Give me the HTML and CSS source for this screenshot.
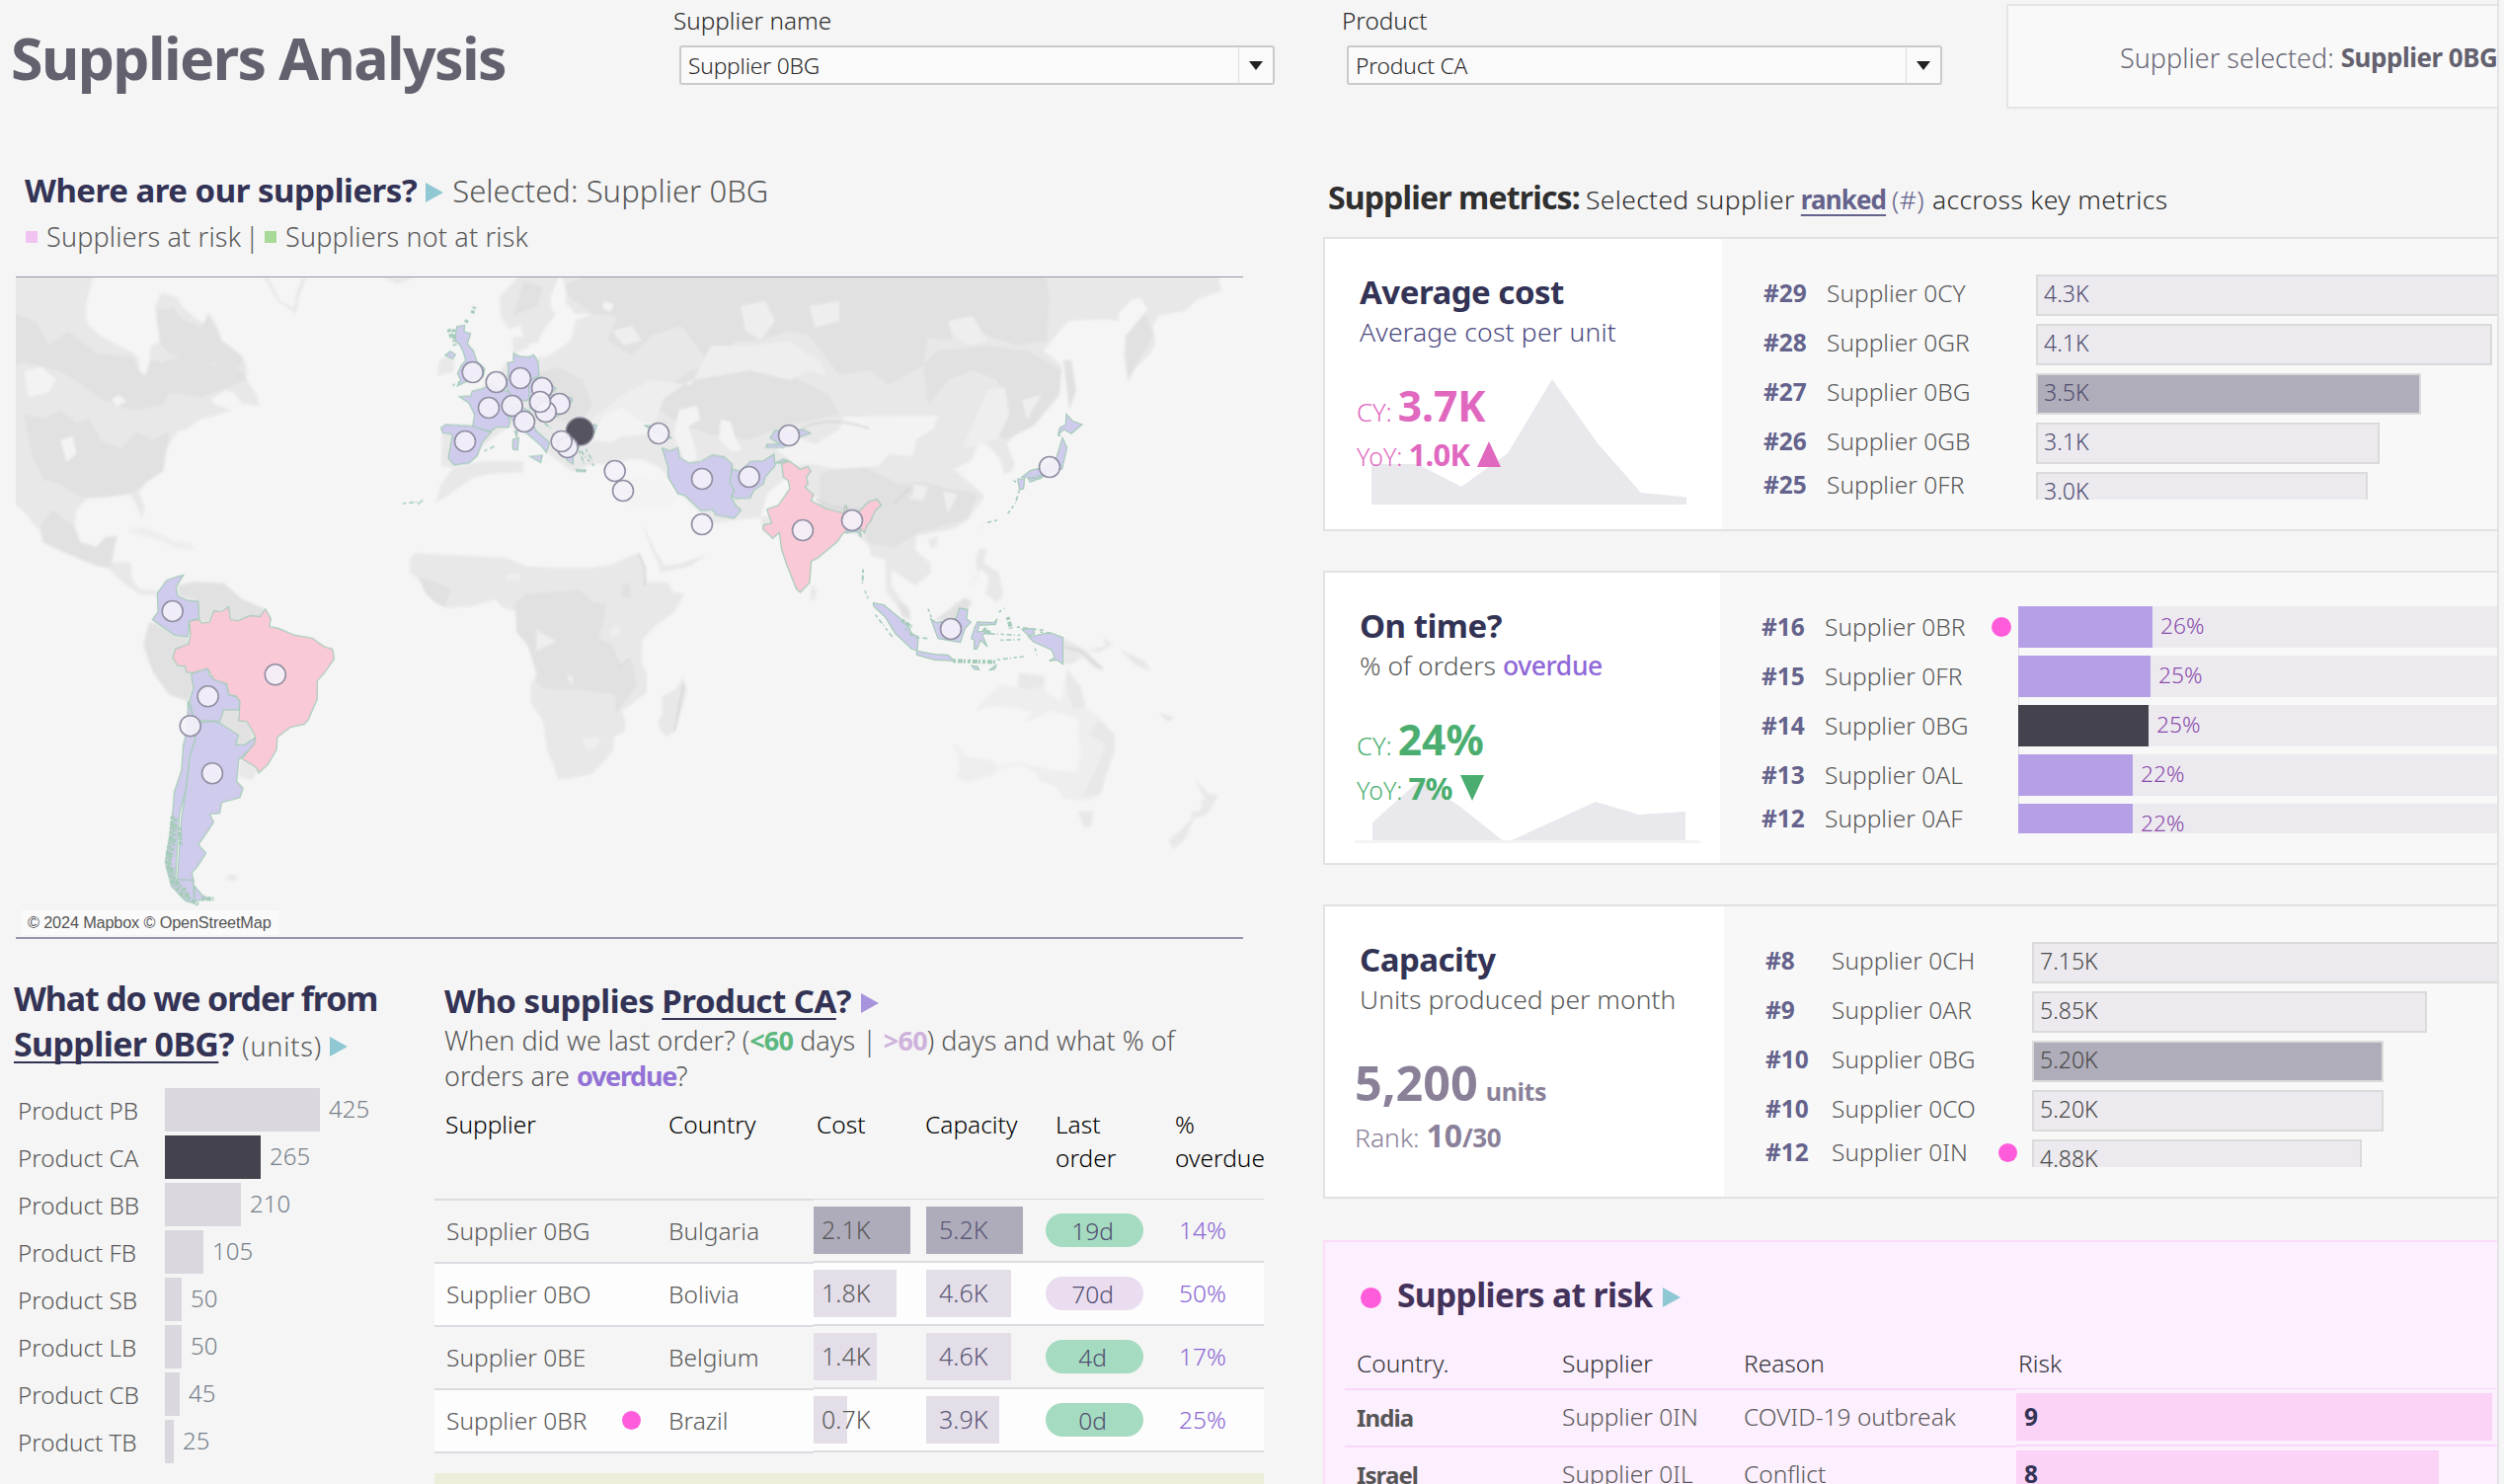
FILE: index.html
```html
<!DOCTYPE html>
<html lang="en">
<head>
<meta charset="utf-8">
<title>Suppliers Analysis</title>
<link rel="stylesheet" href="styles.css">
</head>
<body>
<div class="page">
  <header class="top">
    <h1>Suppliers Analysis</h1>
    <div class="filter filter-supplier"><label>Supplier name</label><div class="select"><span>Supplier 0BG</span><i></i></div></div>
    <div class="filter filter-product"><label>Product</label><div class="select"><span>Product CA</span><i></i></div></div>
    <div class="selected-box"><span>Supplier selected:</span><b>Supplier 0BG</b></div>
  </header>
  <main class="cols">
    <div class="left">
      <h2 class="map-title"><span>Where are our suppliers?</span><i class="tri"></i><em>Selected: Supplier 0BG</em></h2>
      <p class="legend"><i class="sq sq-risk"></i><span class="lg-a">Suppliers at risk</span><span class="lg-bar">|</span><i class="sq sq-ok"></i><span class="lg-b">Suppliers not at risk</span></p>
      <div class="map">
        <svg viewBox="16 281 1243 669" width="1243" height="669">
          <!-- base land -->
          <g class="terrain">
          <g class="land" transform="translate(0 270) scale(.4082 .4401)">
            <path d="M20 15L235 15C215 70 205 110 220 135L250 160 290 180 330 198 345 215 345 240 362 250 372 215 372 185 400 170 388 130 385 90 400 60 440 70 450 90 480 115 505 130 518 105 540 140 550 170 600 205 612 230 612 260 640 300 642 320 600 315 580 290 560 285 525 305 530 315 575 330 530 345 500 350 460 375 440 380 420 410 405 440 405 470 365 495 345 520 360 555 352 580 335 540 320 525 265 530 215 535 190 560 185 600 200 635 240 645 262 622 292 620 280 655 275 680 325 680 328 720 345 742 385 745 395 755 350 755 315 735 270 695 245 690 200 675 150 655 105 635 100 610 60 565 20 535Z"/>
            <path class="l2" d="M20 100L90 130 120 180 170 150 240 200 330 210 345 240 362 250 372 215 400 220 480 200 530 230 560 220 600 240 612 260 560 280 500 300 420 290 400 320 330 330 260 310 200 270 150 240 60 220 20 230Z"/>
            <path class="l2" d="M60 340L110 350 150 330 190 360 220 350 250 400 300 420 340 380 380 400 420 380 405 470 365 495 330 520 265 530 200 530 150 500 110 490 80 440Z"/>
            <path class="l2" d="M390 100L430 95 450 120 500 140 518 110 550 170 600 205 600 230 500 220 420 200 395 170Z"/>
            <path class="l2" d="M130 560L185 600 200 635 240 645 262 622 290 620 275 690 245 690 200 672 110 635 100 600Z"/>
            <path class="hole" d="M60 240L100 230 140 260 120 290 70 300ZM150 400L180 390 190 430 165 450ZM275 305L295 295 315 310 290 322Z"/>
            <path class="l0" d="M315 605L360 600 400 615 430 630 470 635 485 650 440 650 390 628 330 615Z"/>
            <path class="l2" d="M440 735L480 725 555 728 600 765 658 788 650 805 575 815 565 785 528 795 520 818 495 815 490 768 445 760Z"/>
            <path class="l2" d="M385 820L432 848 466 852 468 868 435 880 428 900 440 918 460 920 474 938 480 970 468 1000 420 985 380 935 355 870 370 820Z"/>
            <path class="l2" d="M548 1020L590 1018 592 1045 615 1048 628 1070 620 1100 585 1100 592 1078 545 1050Z"/>
            <path class="l1" d="M598 1130L640 1160 625 1182 590 1172Z"/>
            <path class="l1" d="M558 1408L575 1398 592 1405 580 1415Z"/>
            <path class="l1" d="M655 25L690 80 735 108 742 70 760 25 752 25 735 60 730 95 695 78 665 25ZM950 25L985 40 1030 25Z"/>
          </g>
          <path class="l1" d="M530 275L568 275 558 300 558 312 563 318 550 335 545 347 534 349 527 330 515 333 507 320 506 300ZM519 342L533 340 536 352 520 358Z"/>
          <path class="l1" d="M566 275L573 290 573 307 583 318 600 318 583 324 578 345 555 361 540 362 512 368 500 385 482 395 480 430 448 430 447 472 460 474 485 455 515 432 540 440 558 462 580 478 600 470 605 470 612 470 640 465 652 466 670 475 690 500 720 530 800 520 775 540 770 525 777 500 800 480 880 553 882 563 897 567 897 598 908 613 922 628 922 618 912 607 903 593 903 577 927 593 943 580 942 570 927 557 928 543 967 535 980 527 997 503 993 498 975 480 985 465 990 450 1000 450 1013 465 1017 480 1025 477 1028 470 1020 450 1033 433 1047 432 1073 400 1075 370 1057 355 1082 325 1120 323 1133 325 1133 317 1147 303 1155 302 1162 313 1140 340 1138 360 1142 387 1150 373 1165 358 1170 348 1168 330 1173 320 1200 315 1213 303 1237 295 1233 275Z"/>
          <path class="l2" d="M600 275L1058 275 1063 300 1060 345 1030 350 1000 340 975 335 960 345 940 342 935 370 900 390 880 375 850 380 820 340 800 335 770 345 745 345 725 378 705 350 690 330 660 340 640 360 615 345 625 320 600 318 575 300 572 290Z"/>
          <path class="l2" d="M540 380L565 372 590 385 600 410 585 430 560 425ZM680 390L700 375 760 370 800 380 840 400 850 420 800 430 760 445 720 440 690 430 668 415ZM830 480L870 470 910 490 935 488 960 495 990 500 980 525 930 540 905 555 880 550 870 530 830 515ZM950 355L1000 350 1040 355 1075 375 1073 400 1045 432 1020 445 1005 440 1020 410 1010 385 985 375 960 385 940 410 935 370ZM530 285L550 290 545 310 520 320ZM1140 340L1160 318 1168 340 1150 370 1142 385ZM1077 365L1085 365 1090 395 1083 415Z"/>
          <path class="l0" d="M630 400L660 385 700 390 720 350 760 350 800 345 830 370 800 385 760 375 700 385 670 405 665 425 640 440 615 430 600 450 580 440ZM800 350L830 365 838 382 805 370ZM1000 395L1018 392 1022 420 1010 445 975 455 985 430ZM920 490L940 492 935 507 920 505ZM955 498L970 500 960 520ZM1035 405L1055 400 1040 425Z"/>
          <path class="l0" d="M620 335L640 330 650 345 632 350ZM750 310L775 305 785 325 770 345 755 335ZM820 310L850 305 850 325 825 332ZM960 325L985 320 1000 345 985 350 965 340Z"/>
          <path class="hole" d="M605 432L612 420 632 412 645 425 660 430 655 440 630 442 620 448 604 446 600 438Z"/>
          <path class="hole" d="M688 415L706 411 709 425 697 432 703 450 706 465 695 470 682 440ZM730 425L740 427 745 445 752 455 742 458 728 445ZM612 305L622 308 618 316 610 312Z"/>
          <path class="hole" d="M855 422L950 421 945 435 928 445 925 462 900 460 890 472 850 475 820 470 798 472 800 440 825 450 850 435Z"/>
          <path class="hole" d="M958 480L985 465 975 480 998 503 965 475Z"/>
          <path class="l2" d="M900 500L925 490 925 500 915 510Z"/>
          <path class="ridge" d="M826 506Q850 518 876 516M812 434Q840 420 880 434M905 510L922 494"/>
          <g transform="translate(420 270) scale(.3333)">
            <path class="l1" d="M75 285L95 275 122 283 118 320 70 332Z"/>
            <path class="l1" d="M65 718L80 660 120 610 210 590 330 592 330 625 230 630 180 640 110 690Z"/>
            <path class="l1" d="M690 780L720 860 740 900 745 930 840 910 885 875 800 905 760 910 735 870Z"/>
            <path class="l1" d="M1205 965L1222 985 1215 1015 1202 1010Z"/>
            <path class="hole" d="M640 640L760 650 800 700 760 740 640 720ZM1105 535L1125 550 1160 560 1200 600 1140 585 1100 560Z"/>
          </g>
          <g transform="translate(400 560) scale(.3333)">
            <path class="l1" d="M45 20L60 0 340 15 400 40 500 45 600 45 660 35 735 0 760 45 765 90 830 90 845 120 880 122 850 180 800 215 752 262 750 335 765 365 765 425 690 480 702 515 698 542 665 560 665 600 600 672 550 682 495 690 480 640 462 600 450 510 412 455 412 400 430 370 405 285 370 240 375 180 325 165 305 142 230 162 160 168 130 155 95 125 75 80 45 60Z"/>
            <path class="l2" d="M365 155L400 125 560 113 600 150 645 155 620 260 660 275 690 350 720 325 735 400 700 450 670 490 670 430 550 415 450 412 430 390 430 360 405 285 370 240ZM70 75L130 90 170 110 150 165 120 150 95 125ZM690 100L715 90 715 135 690 135Z"/>
            <path class="l0" d="M335 65L380 62 380 85 340 82ZM430 232L490 268 430 300ZM650 235L680 215 685 245 660 258ZM565 560L630 560 610 595 580 600ZM520 370L540 375 540 410Z"/>
            <path class="l1" d="M875 378L888 420 850 545 825 557 805 540 800 510 812 490 810 438 855 412Z"/>
            <path class="ridge" d="M878 400L850 540M715 320L680 350M740 0L760 45V100"/>
          </g>
          <g transform="translate(780 380) scale(.3333)">
            <path class="l0" d="M620 1028L650 985 705 940 750 950 755 905 835 915 835 960 885 990 895 930 905 895 945 950 958 1005 1000 1040 1045 1090 1048 1140 1020 1215 1003 1275 960 1295 890 1285 870 1250 820 1235 810 1210 760 1182 690 1197 680 1215 600 1237 565 1225 575 1190 565 1140 545 1110 600 1160 680 1170 690 1190 760 1178 850 1200 930 1205 945 1150 935 1090 940 1050 920 1035 850 1020 790 1050 770 1050 800 1025 740 1010 660 1005Z"/>
            <path class="l1" d="M755 905L835 915 830 945 780 955 755 945ZM895 930L905 895 945 950 958 1005 920 1015ZM1000 1050L1045 1090 1048 1140 1020 1215 1003 1275 950 1280 990 1200 1020 1120 970 1090Z"/>
            <path class="l1" d="M935 1325L982 1325 975 1370 955 1375ZM1290 1227L1335 1272 1360 1275 1350 1300 1325 1335 1290 1345 1260 1410 1225 1440 1210 1415 1280 1350 1283 1325 1305 1325 1315 1300 1303 1300 1320 1285ZM890 798L960 835 1015 895 985 890 950 855 915 880 890 875ZM1010 797L1042 818 1000 842 965 835 1020 822Z"/>
            <path class="l1" d="M625 560L635 525 657 530 650 570 695 600 708 670 690 690 655 665 665 610 640 590 592 655 630 610ZM1060 832L1140 870 1158 900 1110 880ZM1180 1023L1230 1040 1210 1055ZM635 470L648 445 645 460ZM480 500L510 490 505 520 490 525Z"/>
            <path class="l2" d="M500 745L590 675 615 690 575 745ZM385 690L415 700 425 745 400 730Z"/>
            <path class="ridge" d="M892 825L940 835 980 870 1010 893"/>
          </g>
          </g>
          <!-- supplier countries -->
          <g class="ok" transform="translate(0 270) scale(.4082 .4401)">
            <path d="M455 710L440 713 413 722 390 752 392 795 378 812 432 848 466 852 470 815 494 810 492 770 465 768 441 758 437 738Z"/>
            <path d="M474 938L515 924 518 940 562 962 568 985 587 990 596 1005 592 1020 555 1020 545 1048 525 1045 500 1045 484 1050 470 1000 480 970Z"/>
            <path d="M466 1000L482 1040 484 1090 470 1130 462 1200 445 1260 440 1330 435 1410 480 1412 482 1465 460 1460 425 1425 410 1370 420 1320 430 1240 432 1210 450 1160 455 1100 466 1060Z"/>
            <path d="M484 1050L525 1046 545 1050 592 1078 585 1100 608 1100 634 1082 630 1102 592 1135 587 1185 603 1200 595 1222 550 1233 545 1258 520 1260 530 1278 515 1300 492 1330 511 1350 490 1380 476 1395 480 1412 440 1410 445 1340 450 1270 462 1200 470 1130 484 1090ZM482 1425L500 1445 518 1455 482 1460Z"/>
            <path class="risk" d="M470 815L494 812 500 820 520 818 530 792 550 793 567 783 572 812 590 815 620 803 645 805 658 788 672 810 668 828 690 832 730 848 775 855 805 875 825 880 829 903 805 935 787 953 787 995 765 1042 755 1053 720 1060 688 1083 686 1112 665 1145 642 1165 636 1153 600 1132 630 1100 634 1085 625 1065 612 1047 592 1045 595 1000 585 988 568 985 562 960 530 950 515 925 478 935 462 933 460 920 440 918 428 900 435 880 468 868 472 850Z"/>
            <path class="isles" d="M428 1265L424 1310 416 1350 417 1385 428 1415 450 1445 495 1470M436 1270L430 1330 420 1370 432 1410 460 1440M445 1290L448 1330M455 1430L470 1455M500 1455L530 1455"/>
            <path class="isles thin" d="M1000 545L1050 540"/>
          </g>
          <g class="ok" transform="translate(420 270) scale(.3333)">
            <path d="M128 182L152 178 150 198 170 203 160 235 178 255 190 290 213 310 208 335 160 348 130 362 140 345 130 325 142 300 155 285 148 260 135 235 122 225ZM92 270L108 257 124 268 115 280Z"/>
            <path d="M135 395L170 393 175 378 205 372 225 360 298 385 300 400 275 430 290 470 285 488 250 487 232 500 175 490 182 450 165 415Z"/>
            <path d="M80 490L95 480 175 485 232 503 205 535 190 575 165 597 120 603 102 582 115 510 85 505Z"/>
            <path d="M300 263L318 272 345 275 362 268 375 290 378 330 355 345 370 380 340 408 300 405 280 370 285 310 282 292 300 290Z"/>
            <path d="M265 430L290 410 325 420 320 440 285 450Z"/>
            <path d="M285 450L320 425 350 440 348 460 370 500 410 535 400 565 385 545 350 515 320 490 300 470ZM298 525L316 520 313 557 298 555ZM303 500L313 498 310 517ZM350 577L388 573 383 595Z"/>
            <path d="M345 345L385 335 430 370 410 390 475 398 480 405 450 445 400 470 350 430Z"/>
            <path d="M420 510L460 520 545 480 553 483 545 510 500 545 480 560 482 600 465 590 440 550ZM490 617L520 618 518 623 492 622Z"/>
            <path d="M752 552L775 560 800 550 805 580 835 597 870 592 905 572 940 578 965 600 960 660 970 680 962 700 975 725 992 740 970 765 915 755 905 738 870 742 820 695 800 690 770 640 770 610Z"/>
            <path d="M965 615L990 622 1020 592 1060 590 1092 570 1095 605 1065 640 1060 660 1030 680 1020 703 975 705 962 695 972 680 957 658ZM1095 597L1120 585 1135 590 1110 597Z"/>
            <path d="M1080 520L1095 498 1180 495 1203 506 1165 520 1120 550 1068 550 1070 540 1110 540ZM700 483L730 485 780 520 760 525Z"/>
            <path d="M1300 800L1352 790 1357 822 1345 805 1310 810Z"/>
            <path class="risk" d="M1115 597L1140 592 1172 616 1195 607 1204 622 1190 640 1195 660 1186 670 1212 693 1205 712 1250 735 1300 748 1306 745 1306 728 1313 727 1314 742 1350 745 1378 715 1405 707 1418 725 1400 740 1385 775 1375 785 1367 808 1358 800 1345 790 1315 800 1300 812 1285 835 1225 885 1205 895 1200 960 1172 990 1160 980 1130 905 1115 860 1108 808 1088 826 1058 797 1060 785 1085 780 1070 738 1105 725 1140 675 1135 650 1120 640Z"/>
            <path class="isles" d="M103 190L112 215M118 190L122 240M155 170L162 158M175 142L182 122"/>
            <path class="isles thin" d="M495 545L520 580 545 605M500 560L515 600M520 555L540 590M212 560L245 545M380 465L420 495M115 362L135 350M10 722L24 708M1362 920L1360 960M1368 985L1378 1008"/>
          </g>
          <g class="ok" transform="translate(780 380) scale(.3333)">
            <path d="M313 692L345 698 415 755 430 785 450 795 447 837 430 832 380 785 350 735 315 703ZM445 838L500 848 540 850 560 868 500 865 445 850ZM488 740L505 752 540 745 565 740 575 708 600 712 597 740 610 750 592 770 578 812 510 800ZM620 770L630 750 680 752 690 740 685 757 635 760 630 780 665 775 645 790 660 825 640 805 628 832 620 832 620 805 611 800ZM785 795L850 782 890 797 890 878 870 865 848 868 865 858 855 835 800 810ZM765 772L800 770 803 785 785 792ZM612 882L630 885 635 895 620 893ZM665 897L688 880 682 893Z"/>
            <path d="M900 118L920 140 948 150 915 178 893 165 875 180 880 160 898 150ZM888 190L902 220 887 285 850 295 820 315 765 310 790 290 830 280 870 250ZM785 315L825 303 815 315 790 325ZM752 315L773 315 770 345 758 348Z"/>
            <path class="isles" d="M555 868L690 872M722 735L732 770M400 745L430 765M648 770L668 785"/>
            <path class="isles thin" d="M320 728L375 800M690 865L770 855M650 785L760 790M700 805L760 803M445 798L480 800M695 720L712 708M805 830L810 850M750 765L830 775M820 780L850 785M480 710L490 735M283 592L280 640M740 320L755 330M757 350L745 390 722 420M690 440L660 448M875 180L890 190M410 770L440 800"/>
          </g>
          <!-- supplier markers -->
          <circle class="mk-sel" cx="587.3" cy="437" r="14"/>
          <g class="mk">
            <circle cx="574.7" cy="453" r="10.5"/><circle cx="568.7" cy="447" r="10.5"/>
            <circle cx="478.7" cy="377" r="10.5"/><circle cx="502.7" cy="387" r="10.5"/><circle cx="527" cy="383" r="10.5"/>
            <circle cx="549" cy="393" r="10.5"/><circle cx="495" cy="413" r="10.5"/><circle cx="518.7" cy="411" r="10.5"/>
            <circle cx="566.7" cy="409" r="10.5"/><circle cx="552.7" cy="417" r="10.5"/><circle cx="547" cy="407" r="10.5"/>
            <circle cx="531" cy="427" r="10.5"/><circle cx="471" cy="447" r="10.5"/><circle cx="622.7" cy="477" r="10.5"/>
            <circle cx="631" cy="497" r="10.5"/><circle cx="667" cy="439" r="10.5"/><circle cx="711" cy="485" r="10.5"/>
            <circle cx="711" cy="531" r="10.5"/><circle cx="758.7" cy="483" r="10.5"/><circle cx="799" cy="441" r="10.5"/>
            <circle cx="813" cy="537" r="10.5"/><circle cx="863" cy="527" r="10.5"/><circle cx="963" cy="637" r="10.5"/>
            <circle cx="1063" cy="473" r="10.5"/><circle cx="174.7" cy="619" r="10.5"/><circle cx="278.8" cy="683.3" r="10.5"/>
            <circle cx="210.6" cy="705.3" r="10.5"/><circle cx="192.7" cy="735.2" r="10.5"/><circle cx="215" cy="783.2" r="10.5"/>
          </g>
        </svg>
        <div class="attrib">© 2024 Mapbox © OpenStreetMap</div>
      </div>

      <div class="bottom">
        <section class="products">
          <h2>What do we order from<br><u>Supplier 0BG</u>? <small>(units)</small><i class="tri"></i></h2>
          <div class="prow"><span>Product PB</span><i style="width:157px"></i><em>425</em></div>
          <div class="prow sel"><span>Product CA</span><i style="width:97px"></i><em>265</em></div>
          <div class="prow"><span>Product BB</span><i style="width:77px"></i><em>210</em></div>
          <div class="prow"><span>Product FB</span><i style="width:39px"></i><em>105</em></div>
          <div class="prow"><span>Product SB</span><i style="width:17px"></i><em>50</em></div>
          <div class="prow"><span>Product LB</span><i style="width:17px"></i><em>50</em></div>
          <div class="prow"><span>Product CB</span><i style="width:15px"></i><em>45</em></div>
          <div class="prow"><span>Product TB</span><i style="width:9px"></i><em>25</em></div>
        </section>
        <section class="who">
          <h2>Who supplies <u>Product CA</u>?<i class="tri tri-purple"></i></h2>
          <p>When did we last order? (<b class="c-green">&lt;60</b> days | <b class="c-lilac">&gt;60</b>) days and what % of<br>orders are <b class="c-purple">overdue</b>?</p>
          <div class="thead"><span>Supplier</span><span>Country</span><span>Cost</span><span>Capacity</span><span>Last order</span><span>% overdue</span></div>
          <div class="panes">
            <div class="pane-a">
              <div><span>Supplier 0BG</span><span>Bulgaria</span></div>
              <div><span>Supplier 0BO</span><span>Bolivia</span></div>
              <div><span>Supplier 0BE</span><span>Belgium</span></div>
              <div><span>Supplier 0BR<i class="dot"></i></span><span>Brazil</span></div>
            </div>
            <div class="pane-b">
              <div class="sel"><span class="cost"><i style="width:98px">2.1K</i></span><span class="cap"><i style="width:98px">5.2K</i></span><span class="pill">19d</span><span class="pct">14%</span></div>
              <div><span class="cost"><i style="width:84px">1.8K</i></span><span class="cap"><i style="width:86px">4.6K</i></span><span class="pill late">70d</span><span class="pct">50%</span></div>
              <div><span class="cost"><i style="width:64px">1.4K</i></span><span class="cap"><i style="width:86px">4.6K</i></span><span class="pill">4d</span><span class="pct">17%</span></div>
              <div><span class="cost"><i style="width:34px">0.7K</i></span><span class="cap"><i style="width:74px">3.9K</i></span><span class="pill">0d</span><span class="pct">25%</span></div>
            </div>
          </div>
          <div class="strip"></div>
        </section>
      </div>
    </div>

    <div class="right">
      <h2 class="metrics-title"><b>Supplier metrics:</b><span>Selected supplier</span><u>ranked</u><em>(#)</em><span>accross key metrics</span></h2>

      <section class="card card-cost">
        <div class="kpi">
          <svg class="area" viewBox="1342 242 402 294" width="402" height="294"><path d="M1389 511V470H1435.6L1480 493 1527 459 1572 384 1618 449 1662 499 1708 503.5V511Z"/></svg>
          <h3>Average cost</h3><p class="sub-indigo">Average cost per unit</p>
          <div class="cy c-pink"><span>CY:</span><b>3.7K</b></div>
          <div class="yoy c-pink"><span>YoY:</span><b>1.0K</b><i class="up"></i></div>
        </div>
        <div class="rows">
          <div><b>#29</b><span>Supplier 0CY</span><i style="width:480px">4.3K</i></div>
          <div><b>#28</b><span>Supplier 0GR</span><i style="width:462px">4.1K</i></div>
          <div class="sel"><b>#27</b><span>Supplier 0BG</span><i style="width:390px">3.5K</i></div>
          <div><b>#26</b><span>Supplier 0GB</span><i style="width:348px">3.1K</i></div>
          <div><b>#25</b><span>Supplier 0FR</span><i style="width:336px">3.0K</i></div>
        </div>
      </section>

      <section class="card card-time">
        <div class="kpi">
          <svg class="area" viewBox="1342 580 400 294" width="400" height="294"><path d="M1390 851V833L1438 790 1479 817 1521.6 851ZM1531 851L1616 812 1660 825 1707 822V851Z"/><path class="base" d="M1372 851H1722V854H1372Z"/></svg>
          <h3>On time?</h3><p>% of orders <b>overdue</b></p>
          <div class="cy c-kgreen"><span>CY:</span><b>24%</b></div>
          <div class="yoy c-kgreen"><span>YoY:</span><b>7%</b><i class="down"></i></div>
        </div>
        <div class="rows">
          <div><b>#16</b><span>Supplier 0BR<i class="dot"></i></span><div class="track"><i style="width:136px"></i><em>26%</em></div></div>
          <div><b>#15</b><span>Supplier 0FR</span><div class="track"><i style="width:134px"></i><em>25%</em></div></div>
          <div class="sel"><b>#14</b><span>Supplier 0BG</span><div class="track"><i style="width:132px"></i><em>25%</em></div></div>
          <div><b>#13</b><span>Supplier 0AL</span><div class="track"><i style="width:116px"></i><em>22%</em></div></div>
          <div><b>#12</b><span>Supplier 0AF</span><div class="track"><i style="width:116px"></i><em>22%</em></div></div>
        </div>
      </section>

      <section class="card card-cap">
        <div class="kpi">
          <h3>Capacity</h3><p>Units produced per month</p>
          <div class="units"><b>5,200</b><span>units</span></div>
          <div class="rank"><span>Rank:</span><b>10</b><b class="of">/30</b></div>
        </div>
        <div class="rows">
          <div><b>#8</b><span>Supplier 0CH</span><i style="width:480px">7.15K</i></div>
          <div><b>#9</b><span>Supplier 0AR</span><i style="width:400px">5.85K</i></div>
          <div class="sel"><b>#10</b><span>Supplier 0BG</span><i style="width:356px">5.20K</i></div>
          <div><b>#10</b><span>Supplier 0CO</span><i style="width:356px">5.20K</i></div>
          <div><b>#12</b><span>Supplier 0IN<i class="dot"></i></span><i style="width:334px">4.88K</i></div>
        </div>
      </section>

      <section class="risk-card">
        <h3><i class="dot"></i><span>Suppliers at risk</span><i class="tri"></i></h3>
        <div class="rhead"><span>Country.</span><span>Supplier</span><span>Reason</span><span>Risk</span></div>
        <div class="panes">
          <div class="rpane-a">
            <div><b>India</b><span>Supplier 0IN</span><span>COVID-19 outbreak</span></div>
            <div><b>Israel</b><span>Supplier 0IL</span><span>Conflict</span></div>
          </div>
          <div class="rpane-b">
            <div><b style="width:482px">9</b></div>
            <div><b style="width:428px">8</b></div>
          </div>
        </div>
      </section>
    </div>
  </main>
</div>
</body>
</html>
```
FILE: styles.css
```css
* { box-sizing: border-box; }
html, body { margin: 0; height: 1503px; overflow: hidden; background: #f5f5f5; }
body { font: 300 24.5px/1.4 "Noto Sans", "Open Sans", sans-serif; color: #5a5a5a; }
h1, h2, h3, p { margin: 0; font-weight: 300; }
b { font-weight: 700; }
i, em { font-style: normal; }
.page { width: 2531px; height: 1503px; overflow: hidden; border-right: 2px solid #e3e3e6; white-space: nowrap; }

/* header */
.top { display: flex; height: 160px; align-items: flex-start; overflow: hidden; }
h1 { flex: none; width: 682px; padding-left: 11px; margin-top: 18px; font: 700 59px/80px "Noto Sans", sans-serif; letter-spacing: -1.6px; color: #64616f; }
.filter { flex: none; padding-top: 3px; color: #2c2c2c; }
.filter label { display: block; height: 43px; font-size: 24.3px; line-height: 36px; }
.filter-supplier { width: 677px; }
.filter-product { width: 673px; }
.select { display: flex; align-items: center; width: 603px; height: 40px; margin-left: 6px; border: 2px solid #cacaca; border-radius: 3px; background: #fafafa; font-size: 22.8px; letter-spacing: -.2px; }
.filter-product .select { margin-left: 5px; }
.select span { flex: 1; padding: 1px 0 0 7px; }
.select i { display: flex; width: 35px; height: 100%; align-items: center; justify-content: center; border-left: 1px solid #ddd; }
.select i::after { content: ""; border: 7px solid transparent; border-top: 9px solid #222; border-bottom: 0; }
.selected-box { display: flex; flex: none; align-items: center; gap: 7px; width: 520px; height: 106px; margin-top: 4px; padding: 3px 0 0 113px; border: 2px solid #e5e5e8; background: #f9f9f9; color: #6a6876; font-size: 27px; }
.selected-box b { font-size: 26px; letter-spacing: -.5px; color: #64616f; }

.cols { display: flex; }
.left { width: 1340px; flex: none; }
.right { width: 1189px; flex: none; padding-top: 15px; }

.tri { display: inline-block; width: 0; height: 0; border: 10px solid transparent; border-left: 18px solid #8fc8d3; border-right: 0; }
.tri-purple { border-left-color: #a893dd; }
.dot { display: inline-block; flex: none; width: 20px; height: 20px; border-radius: 50%; background: #ff5cdb; }

/* map */
.map-title { display: flex; align-items: baseline; gap: 9px; height: 50px; margin-top: 8px; padding-left: 25px; line-height: 50px; }
.map-title span { font-weight: 700; font-size: 33px; letter-spacing: -.5px; color: #333355; }
.map-title em { font-size: 31px; letter-spacing: .05px; }
.legend { display: flex; align-items: center; height: 40px; margin-top: 2px; padding-left: 26px; font-size: 27px; }
.legend .lg-a { width: 210px; padding-left: 9px; letter-spacing: .15px; }
.legend .lg-bar { width: 20px; }
.legend .lg-b { padding-left: 9px; letter-spacing: .15px; }
.sq { width: 12px; height: 12px; background: #f0c3f0; }
.sq-ok { background: #a9d999; }
.map { position: relative; width: 1243px; height: 671px; margin: 20px 0 0 16px; border-top: 1.5px solid #9896aa; border-bottom: 2px solid #9896aa; }
.map svg { display: block; }
.terrain { filter: blur(1px); }
.l0 { fill: #eeeeee; }
.l1, .land path { fill: #e8e8e8; }
.l2, .land .l2 { fill: #e1e1e1; }
.land .l0 { fill: #eeeeee; }
.hole, .land .hole { fill: #f3f3f3; }
.ridge { fill: none; stroke: #d4d4d4; stroke-width: 1.5; vector-effect: non-scaling-stroke; }
.ok path { fill: #cfcbec; stroke: #a5ccb9; stroke-width: 1.2; vector-effect: non-scaling-stroke; }
.ok .risk { fill: #f9c9d6; }
.ok .isles { fill: none; stroke: #a5ccb9; stroke-width: 4; stroke-dasharray: 3 2 5 1 2 2; }
.ok .thin { stroke-width: 1.6; stroke-dasharray: 3 3 5 2 1 3; }
.mk circle { fill: #f3f0f9; fill-opacity: .92; stroke: #918fa3; stroke-width: 1.6; }
.mk-sel { fill: #56545f; stroke: #8b8999; stroke-width: 1.5; }
.attrib { position: absolute; left: 6px; bottom: 2px; height: 25px; padding: 0 8px 0 6px; background: #fafafa; font: 16.3px/25px "Liberation Sans", Arial, sans-serif; letter-spacing: -.16px; color: #555; }

/* products */
.bottom { display: flex; padding-top: 1px; }
.products { width: 440px; padding-top: 36px; }
.products h2 { height: 114px; padding-left: 14px; font: 700 34px/46px "Noto Sans", sans-serif; letter-spacing: -1.15px; color: #333355; }
.products u { letter-spacing: -.65px; }
.products small { margin-left: 1px; font-weight: 300; font-size: 27px; letter-spacing: .8px; color: #5a5a5a; }
.products .tri { margin-left: 8px; }
u { text-decoration-thickness: 2px; text-underline-offset: 5px; text-decoration-skip-ink: none; }
.prow { display: flex; align-items: center; height: 44px; margin-bottom: 4px; }
.prow span { width: 167px; padding: 1px 0 0 18px; font-size: 24.2px; }
.prow i { height: 44px; background: #dad7df; }
.prow.sel i { background: #44424c; }
.prow em { padding: 0 0 2px 9px; font-size: 24px; color: #76808a; }

/* supplier table */
.who { width: 843px; padding-top: 40px; }
.who h2 { height: 44px; padding-left: 10px; font: 700 33px/44px "Noto Sans", sans-serif; letter-spacing: -.5px; color: #333355; }
.who h2 .tri { margin-left: 10px; }
.who p { padding-left: 10px; font-size: 27px; line-height: 36px; }
.who p b { letter-spacing: -.8px; }
.who p .c-purple { letter-spacing: -1.3px; }
.c-green { color: #5cb87f; }
.c-lilac { color: #cfb2dc; }
.c-purple { color: #9272d6; }
.thead { display: grid; grid-template-columns: 226px 150px 110px 132px 121px 100px; height: 92px; margin-top: 14px; padding-left: 11px; line-height: 34px; color: #000; }
.thead span:nth-child(n+5) { width: 60px; white-space: normal; }
.panes { display: flex; }
.pane-a { width: 384px; border-top: 2px solid #dcdbe1; }
.pane-b { width: 456px; border-top: 1px solid #dcdbe1; }
.panes > div > div { display: flex; align-items: center; height: 64px; border-bottom: 2px solid #dcdbe1; }
.pane-a > div:nth-child(even), .pane-b > div:nth-child(even) { background: #fdfdfd; }
.pane-a span:first-child { display: flex; align-items: center; width: 237px; padding-left: 12px; }
.pane-a .dot { margin-left: auto; margin-right: 28px; width: 19px; height: 19px; }
.pane-b .cost { width: 114px; }
.pane-b .cap { width: 121px; color: #5b5878; }
.pane-b .cost i, .pane-b .cap i { display: block; height: 48px; padding-left: 8px; background: #e3dee8; font-size: 25px; line-height: 46px; }
.pane-b .cap i { padding-left: 13px; }
.pane-b .sel .cost i, .pane-b .sel .cap i { background: #aeacbb; }
.pill { width: 99px; height: 34px; border-radius: 17px; background: #a5dbc0; line-height: 36px; text-align: center; text-indent: -4px; color: #514e70; }
.pill.late { background: #eaddf0; }
.pct { padding-left: 36px; color: #8a66d4; }
.strip { width: 840px; height: 20px; margin-top: 20px; background: #eceeda; }

/* metrics */
.metrics-title { display: flex; align-items: baseline; height: 50px; padding-left: 5px; line-height: 50px; font-size: 26.5px; letter-spacing: .33px; color: #2f2f2f; }
.metrics-title b { margin-right: 6px; font-size: 32px; letter-spacing: -.85px; }
.metrics-title u { margin: 0 6px; font-weight: 700; font-size: 26px; letter-spacing: -.9px; color: #65638c; }
.metrics-title em { margin-right: 8px; color: #65638c; }
.card { display: flex; width: 1240px; height: 298px; margin-top: 15px; border: 2px solid #e1e1e6; background: #f8f8f8; }
.card + .card { margin-top: 40px; }
.kpi { position: relative; width: 402px; padding: 32px 0 0 35px; background: #fff; }
.kpi > * { position: relative; }
.kpi .area { position: absolute; left: 0; top: 0; }
.area path { fill: #e9e8ed; }
.area .base { fill: #f4f4f4; }
.card-time .kpi { width: 400px; }
.card-cap .kpi { width: 404px; }
.kpi h3 { font: 700 33px/44px "Noto Sans", sans-serif; letter-spacing: -.5px; color: #333355; }
.kpi p { height: 37px; font-size: 26.5px; line-height: 36px; }
.kpi .sub-indigo { letter-spacing: .2px; color: #4d4b82; }
.kpi p b { font-weight: 500; letter-spacing: -.4px; color: #9068d8; }
.cy, .yoy, .units, .rank { display: flex; align-items: baseline; margin-left: -3px; }
.cy { height: 50px; margin-top: 31px; font-size: 25.5px; line-height: 50px; }
.cy b { margin-left: 6px; font-size: 42.5px; }
.yoy { height: 40px; margin-top: 4px; font-size: 25px; line-height: 40px; }
.yoy b { margin-left: 6px; font-size: 31px; letter-spacing: -.7px; }
.c-pink { color: #e068bf; }
.c-kgreen { color: #4bae70; }
.up, .down { align-self: center; margin: 0 0 0 8px; border: 12.5px solid transparent; }
.up { border-top: 0; border-bottom: 26px solid #e068bf; }
.down { border-bottom: 0; border-top: 26px solid #4bae70; }
.units { height: 56px; margin: 37px 0 0 -5px; line-height: 56px; color: #8a8199; }
.units b { font-size: 48.5px; }
.units span { margin-left: 8px; font-weight: 700; font-size: 25px; letter-spacing: -.4px; }
.rank { height: 40px; margin: 6px 0 0 -5px; font-size: 26.5px; line-height: 40px; color: #8a8199; }
.rank b { margin-left: 7px; font-size: 32px; }
.rank .of { margin-left: 0; font-size: 26px; letter-spacing: -.5px; }

.rows { flex: 1; height: 228px; margin-top: 36px; padding-left: 42px; overflow: hidden; }
.rows > div { display: grid; grid-template-columns: 64px 212px auto; grid-template-rows: 42px; align-items: center; justify-content: start; height: 42px; margin-bottom: 8px; }
.rows > div > b { padding-bottom: 3px; font-size: 24.5px; letter-spacing: -.1px; color: #65638c; }
.rows > div > span { display: flex; align-items: center; padding-bottom: 3px; }
.rows > div:last-child > b, .rows > div:last-child > span { padding-bottom: 15px; }
.rows > div > i { height: 42px; padding-left: 6px; border: 2px solid #dadadb; background: #eceaef; font-size: 23px; line-height: 35px; color: #514e70; }
.rows .sel > i { background: #afadb9; }
.card-time .rows { height: 230px; margin-top: 34px; background: linear-gradient(#ddd, #ddd) 302px 0 / 1px 100% no-repeat; }
.card-time .rows > div { grid-template-columns: 64px 196px 600px; }
.card-time .rows > div > b, .card-time .rows > div > span { padding-bottom: 0; }
.card-time .rows > div:last-child > b, .card-time .rows > div:last-child > span { padding-bottom: 12px; }
.rows .dot { margin-left: auto; margin-right: 7px; }
.track { display: flex; align-items: center; height: 42px; background: #eceaef; }
.track i { height: 42px; background: #b5a0e8; }
.sel .track i { background: #44424c; }
.track em { padding: 0 0 2px 8px; font-size: 22.8px; color: #8b4bad; }
.card-cap .rows > div { grid-template-columns: 67px 203px auto; }
.card-cap .rows > div > i { color: #484848; }
.card-cap .dot { margin-right: 15px; width: 19px; height: 19px; }

/* suppliers at risk */
.risk-card { width: 1240px; height: 300px; margin-top: 42px; padding-top: 31px; border: 2px solid #fbdcfb; background: #fceffe; }
.risk-card h3 { display: flex; align-items: center; height: 44px; padding-left: 36px; font: 700 33.5px/44px "Noto Sans", sans-serif; letter-spacing: -.6px; color: #43325a; }
.risk-card h3 .dot { width: 21px; height: 21px; margin-right: 16px; margin-top: 6px; }
.risk-card h3 .tri { margin: 5px 0 0 10px; }
.rhead { display: grid; grid-template-columns: 208px 184px 278px 100px; height: 43px; margin-top: 30px; padding-left: 32px; line-height: 36px; color: #333338; }
.risk-card .panes { padding-left: 20px; }
.rpane-a { width: 680px; border-top: 2px solid #f9d7fa; }
.rpane-b { flex: 1; border-top: 1px solid #f9d7fa; }
.risk-card .panes > div > div { height: 58px; border-bottom-color: #f9d7fa; }
.rpane-a > div > * { padding-bottom: 1px; }
.rpane-a > div > span { width: 184px; }
.rpane-a b { width: 220px; padding-left: 12px; font-size: 24px; letter-spacing: -.9px; color: #555; }
.rpane-b b { height: 48px; padding-left: 8px; background: #fbd3f6; line-height: 47px; color: #333355; }
```
